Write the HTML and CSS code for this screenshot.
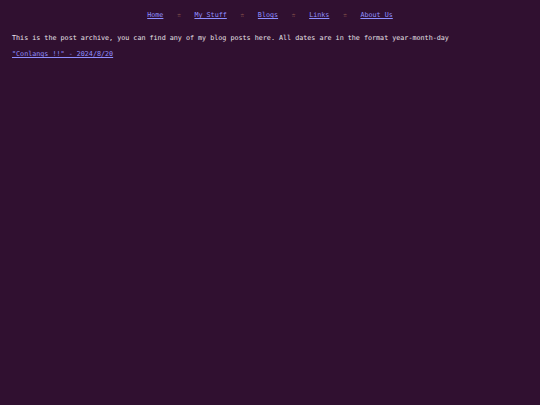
FILE: index.html
```html
<!DOCTYPE html>
<html>
<head>
<meta charset="utf-8">
<link rel="stylesheet" href="styles.css">
</head>
<body>
<nav class="nav">
  <a href="#">Home</a><span class="star">☆</span>
  <a href="#">My Stuff</a><span class="star">☆</span>
  <a href="#">Blogs</a><span class="star">☆</span>
  <a href="#">Links</a><span class="star">☆</span>
  <a href="#">About Us</a>
</nav>
<main class="content">
  <p class="intro">This is the post archive, you can find any of my blog posts here. All dates are in the format year-month-day</p>
  <p class="post"><a href="#">"Conlangs !!" - 2024/8/20</a></p>
</main>
</body>
</html>
```
FILE: styles.css
```css
html, body {
  margin: 0;
  padding: 0;
  background: #301030;
  height: 100%;
}
body {
  font-family: "DejaVu Sans Mono", monospace;
  font-size: 6.72px;
  line-height: 8px;
  color: #e8e2e8;
}
a {
  color: #8f8fff;
}
.nav {
  display: flex;
  justify-content: center;
  align-items: center;
  gap: 13.5px;
  padding-top: 11px;
}
.star {
  color: #d89a6a;
}
.content {
  padding: 0 12px;
}
.intro {
  margin: 15px 0 0;
}
.post {
  margin: 8px 0 0;
}
```
